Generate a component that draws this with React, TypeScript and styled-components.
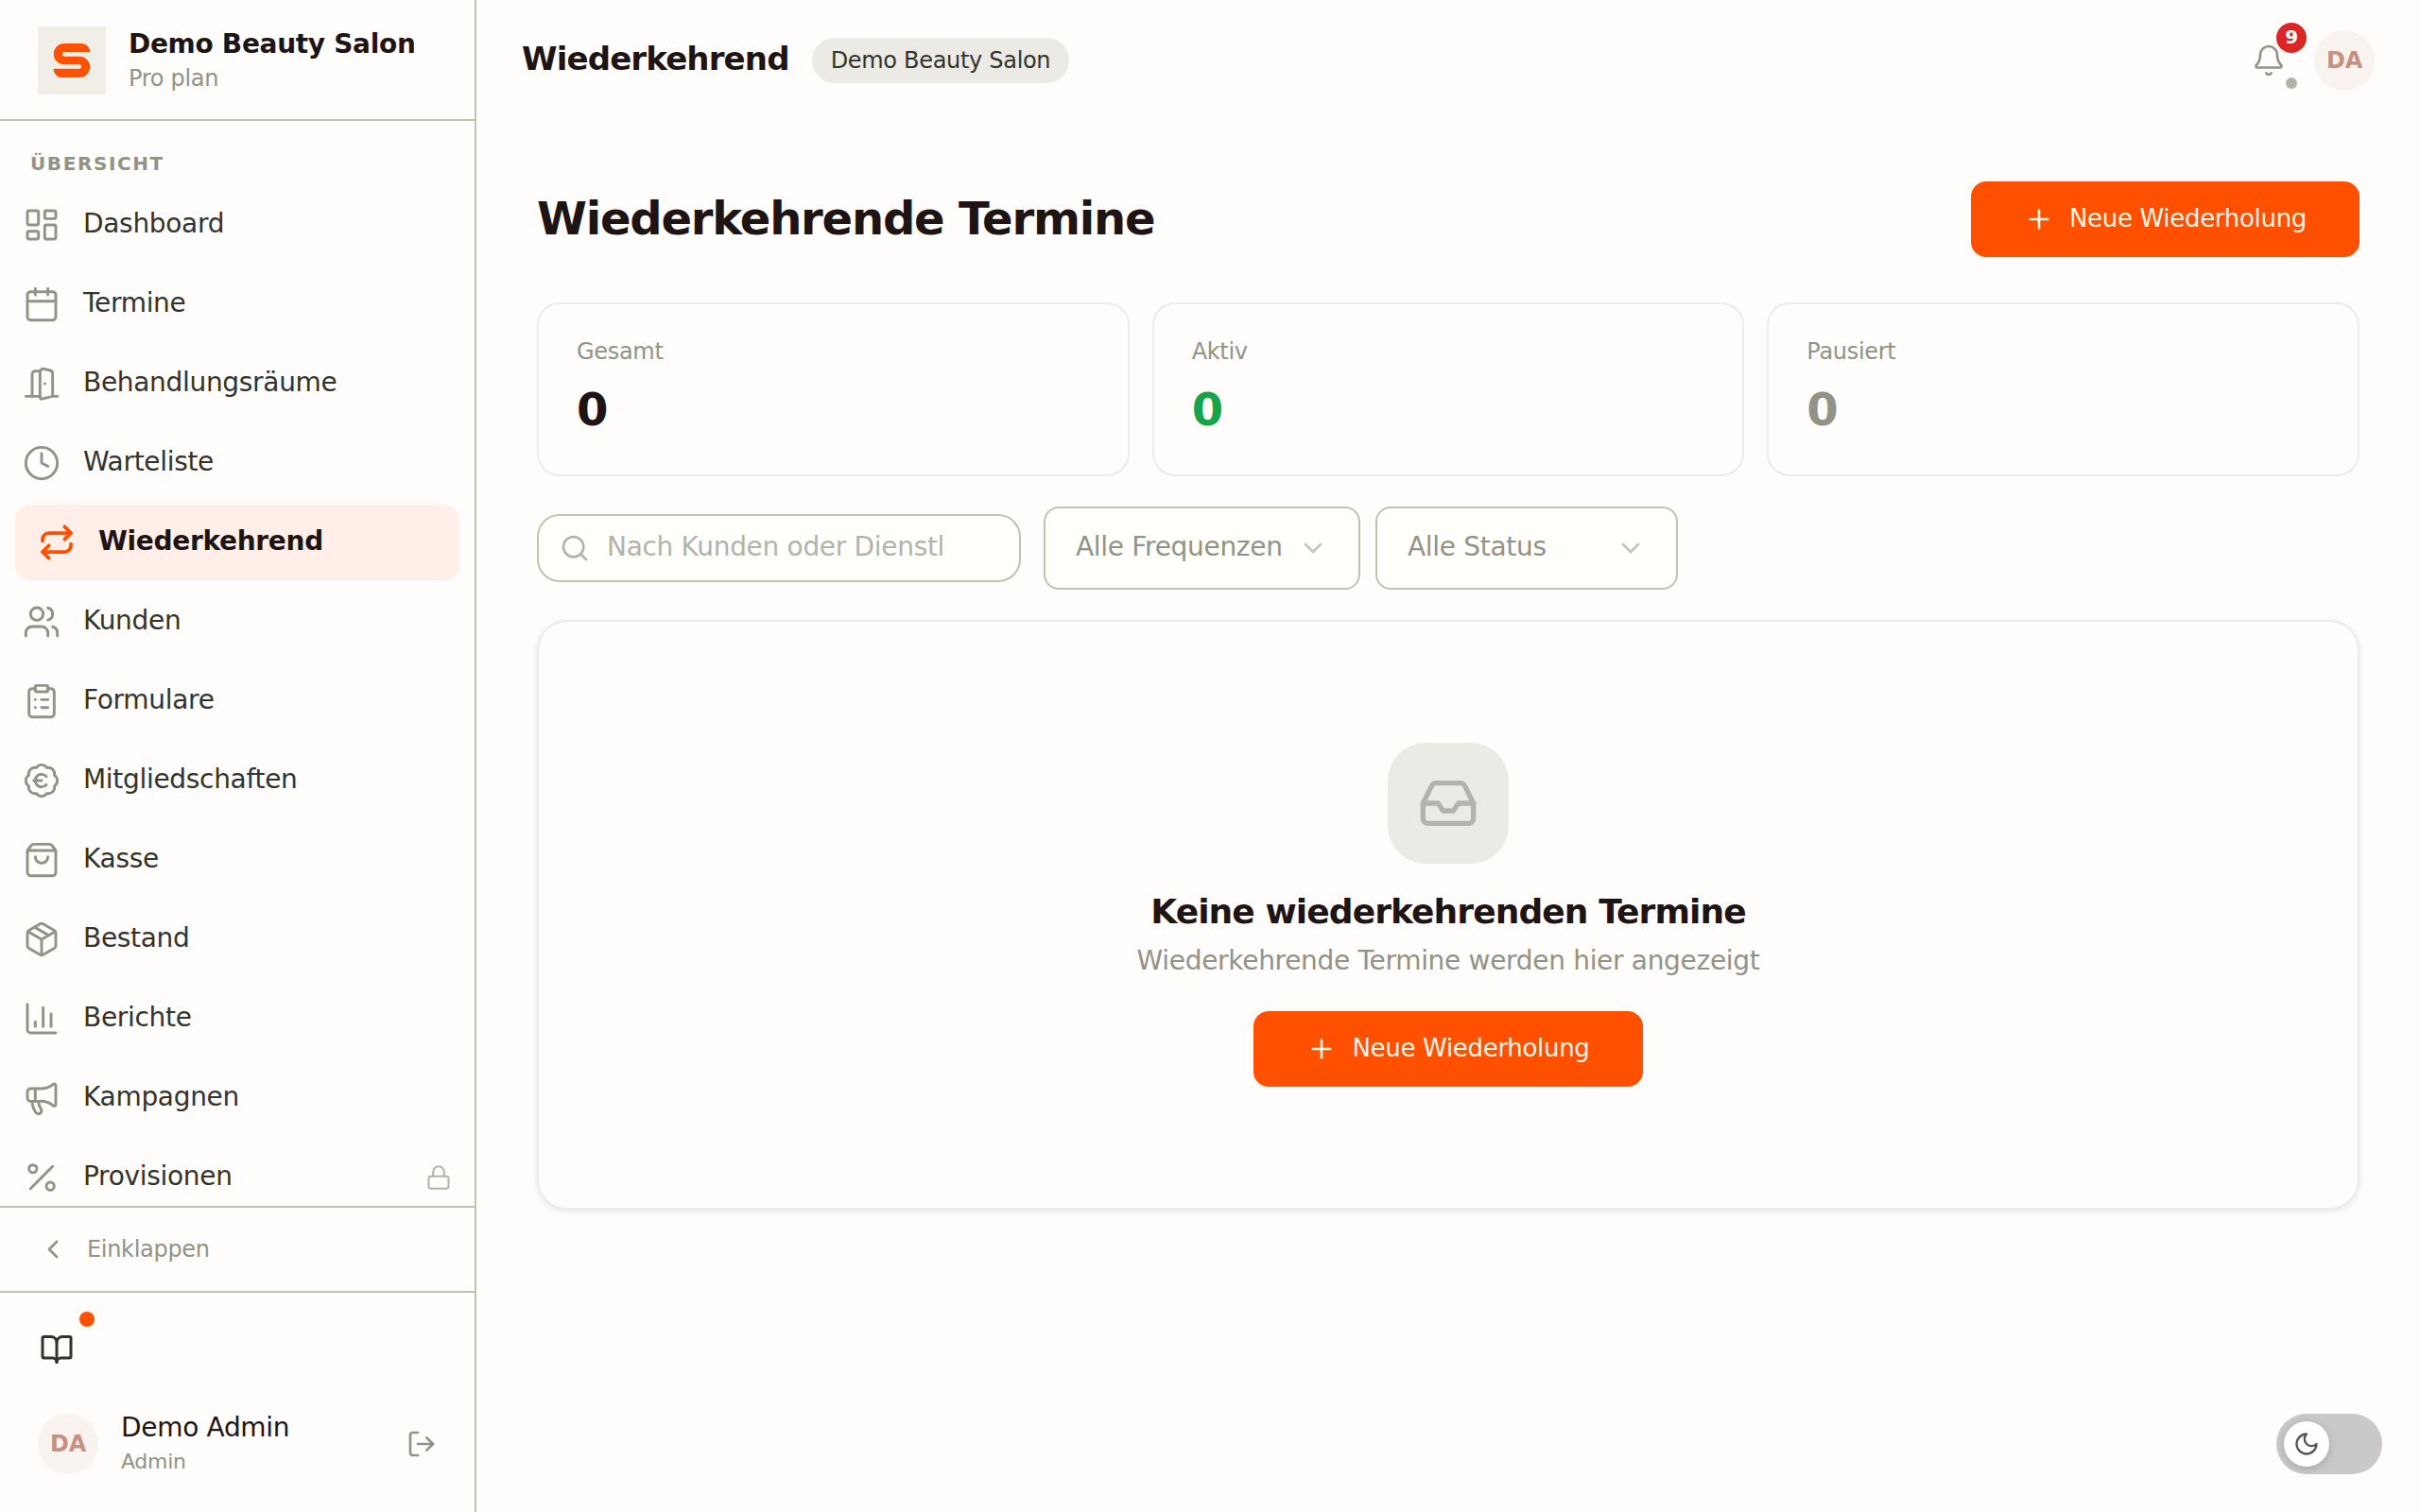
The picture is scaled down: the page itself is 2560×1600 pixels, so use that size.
import React from 'react';
import styled, { createGlobalStyle, css } from 'styled-components';
import {
  BadgeEuro,
  Bell,
  BookOpen,
  Calendar,
  ChartColumn,
  ChevronDown,
  ChevronLeft,
  ClipboardList,
  Clock,
  DoorOpen,
  Inbox,
  LayoutDashboard,
  Lock,
  LogOut,
  Megaphone,
  Package,
  Percent,
  Plus,
  Repeat,
  Search,
  ShoppingBag,
  Users,
  type LucideIcon,
} from 'lucide-react';

const color = {
  page: '#fefdfb',
  field: '#fffffb',
  ink: '#1f1414',
  text: '#33332e',
  muted: '#929286',
  faint: '#b3b2ab',
  line: '#c2c2b2',
  softLine: '#ecebe8',
  chip: '#ebeae5',
  accent: '#ff5000',
  accentSoft: '#ffefe8',
  onAccent: '#fff5e8',
  danger: '#dc2626',
};

const GlobalStyle = createGlobalStyle`
  *, *::before, *::after { box-sizing: border-box; }
  body {
    margin: 0;
    background: ${color.page};
    color: ${color.text};
    font-family: "DejaVu Sans", Verdana, sans-serif;
    font-size: 28px;
    line-height: 40px;
    letter-spacing: -0.011em;
  }
  button, input, select { font: inherit; letter-spacing: inherit; }
  h1, h2, p, ul { margin: 0; padding: 0; }
  svg { flex: none; display: block; }
`;

const Shell = styled.div`
  display: flex;
  min-height: 100vh;
`;

/* Sidebar */

const Sidebar = styled.aside`
  position: sticky;
  top: 0;
  flex: none;
  display: flex;
  flex-direction: column;
  width: 504px;
  height: 100vh;
  border-right: 2px solid ${color.line};
`;

const Brand = styled.div`
  display: flex;
  align-items: center;
  gap: 24px;
  padding: 28px 24px 26px 40px;
  border-bottom: 2px solid ${color.line};
`;

const BrandText = styled.div`
  display: flex;
  flex-direction: column;
`;

const BrandName = styled.span`
  font-weight: 700;
  line-height: 38px;
  color: ${color.ink};
`;

const BrandPlan = styled.span`
  font-size: 24px;
  line-height: 34px;
  color: ${color.muted};
`;

const Nav = styled.nav`
  flex: 1;
  min-height: 0;
  overflow: hidden;
`;

const NavHeading = styled.h2`
  padding: 32px 32px 12px;
  font-size: 20px;
  font-weight: 700;
  line-height: 26px;
  letter-spacing: 0.08em;
  text-transform: uppercase;
  color: ${color.muted};
`;

const NavList = styled.ul`
  display: flex;
  flex-direction: column;
  gap: 4px;
  list-style: none;
`;

const NavLink = styled.a<{ $active?: boolean }>`
  display: flex;
  align-items: center;
  gap: 24px;
  height: 80px;
  padding: 0 24px;
  color: ${color.text};
  text-decoration: none;

  > svg { color: ${color.muted}; }

  ${({ $active }) =>
    $active &&
    css`
      margin: 0 16px;
      border-radius: 16px;
      background: ${color.accentSoft};
      color: ${color.ink};
      font-weight: 700;

      > svg { color: ${color.accent}; }
    `}
`;

const NavLabel = styled.span`
  flex: 1;
  padding-bottom: 2px;
`;

const LockMark = styled(Lock)`
  && { color: ${color.faint}; }
`;

const CollapseBar = styled.div`
  padding: 20px 24px;
  border-top: 2px solid ${color.line};
  border-bottom: 2px solid ${color.line};
`;

const CollapseButton = styled.button`
  display: flex;
  align-items: center;
  gap: 20px;
  width: 100%;
  height: 48px;
  padding: 0 16px;
  border: 0;
  background: none;
  color: ${color.muted};
  font-size: 24px;
`;

const SidebarFooter = styled.div`
  display: flex;
  flex-direction: column;
  gap: 24px;
  padding: 24px 24px 32px;
`;

const IconButton = styled.button<{ $tone?: string }>`
  position: relative;
  display: grid;
  place-items: center;
  width: 72px;
  height: 72px;
  padding: 0;
  border: 0;
  background: none;
  color: ${({ $tone }) => $tone ?? color.muted};
`;

const NewsDot = styled.span`
  position: absolute;
  top: -4px;
  right: -4px;
  width: 16px;
  height: 16px;
  border-radius: 50%;
  background: ${color.accent};
`;

const UserRow = styled.div`
  display: flex;
  align-items: center;
  gap: 24px;
  height: 80px;
  padding: 0 0 0 16px;
`;

const Avatar = styled.span`
  display: grid;
  place-items: center;
  flex: none;
  width: 64px;
  height: 64px;
  border-radius: 50%;
  background: #f8f3ef;
  color: #c79080;
  font-size: 24px;
  font-weight: 700;
`;

const UserText = styled.div`
  display: flex;
  flex: 1;
  flex-direction: column;
`;

const UserName = styled.span`
  line-height: 38px;
  color: ${color.ink};
`;

const UserRole = styled.span`
  font-size: 22px;
  line-height: 34px;
  color: ${color.muted};
`;

const LogoutButton = styled(IconButton)`
  width: 64px;
  height: 64px;
`;

/* Main column */

const Main = styled.div`
  flex: 1;
  min-width: 0;
`;

const TopBar = styled.header`
  display: flex;
  align-items: center;
  height: 128px;
  padding: 0 48px;
`;

const TopTitle = styled.span`
  margin-right: 24px;
  padding-bottom: 4px;
  font-size: 34px;
  font-weight: 700;
  letter-spacing: -0.025em;
  color: ${color.ink};
`;

const SalonChip = styled.span`
  padding: 4px 20px;
  border-radius: 24px;
  background: ${color.chip};
  font-size: 24px;
`;

const TopActions = styled.div`
  display: flex;
  align-items: center;
  gap: 12px;
  margin-left: auto;
`;

const CountBadge = styled.span`
  position: absolute;
  top: -4px;
  right: -4px;
  width: 32px;
  height: 32px;
  border-radius: 50%;
  background: ${color.danger};
  color: #fff;
  font-size: 20px;
  font-weight: 700;
  line-height: 30px;
  text-align: center;
`;

const StatusDot = styled.span`
  position: absolute;
  right: 6px;
  bottom: 6px;
  width: 12px;
  height: 12px;
  border-radius: 50%;
  background: ${color.faint};
`;

const Content = styled.main`
  display: flex;
  flex-direction: column;
  padding: 64px;
`;

const PageHead = styled.div`
  display: flex;
  align-items: center;
  justify-content: space-between;
  margin-bottom: 48px;
`;

const PageTitle = styled.h1`
  padding-bottom: 2px;
  font-size: 48px;
  font-weight: 700;
  line-height: 60px;
  letter-spacing: -0.025em;
  color: ${color.ink};
`;

const PrimaryButton = styled.button`
  display: flex;
  align-items: center;
  gap: 16px;
  height: 80px;
  padding: 0 56px;
  border: 0;
  border-radius: 16px;
  background: ${color.accent};
  color: ${color.onAccent};
  font-size: 26px;
`;

const ButtonLabel = styled.span`
  padding-bottom: 2px;
`;

const Stats = styled.div`
  display: grid;
  grid-template-columns: repeat(3, 1fr);
  gap: 24px;
  margin-bottom: 32px;
`;

const StatCard = styled.section`
  display: flex;
  flex-direction: column;
  gap: 8px;
  padding: 32px 40px 34px;
  border: 2px solid ${color.softLine};
  border-radius: 24px;
`;

const StatLabel = styled.span`
  font-size: 24px;
  line-height: 36px;
  color: ${color.muted};
`;

const StatValue = styled.span<{ $tone: string }>`
  font-size: 48px;
  font-weight: 700;
  line-height: 70px;
  color: ${({ $tone }) => $tone};
`;

const Filters = styled.form`
  display: flex;
  align-items: center;
  gap: 24px;
  margin-bottom: 32px;
`;

const SearchBox = styled.label`
  display: flex;
  align-items: center;
  gap: 18px;
  width: 512px;
  height: 72px;
  padding: 0 78px 0 22px;
  border: 2px solid ${color.line};
  border-radius: 24px;
  background: ${color.field};
  color: ${color.faint};
`;

const SearchInput = styled.input`
  flex: 1;
  min-width: 0;
  padding: 0 0 2px;
  border: 0;
  outline: 0;
  background: none;
  color: ${color.text};

  &::placeholder { color: ${color.faint}; opacity: 1; }
`;

const SelectGroup = styled.div`
  display: flex;
  gap: 16px;
`;

const SelectBox = styled.div`
  position: relative;

  > svg {
    position: absolute;
    top: 28px;
    right: 34px;
    color: #c5c4bf;
    pointer-events: none;
  }
`;

const Select = styled.select`
  appearance: none;
  display: block;
  min-width: 320px;
  height: 88px;
  padding: 0 80px 2px 32px;
  border: 2px solid ${color.line};
  border-radius: 16px;
  background: ${color.field};
  color: ${color.muted};
`;

const EmptyPanel = styled.section`
  display: flex;
  flex-direction: column;
  align-items: center;
  padding: 128px 64px;
  border: 2px solid ${color.softLine};
  border-radius: 32px;
  box-shadow: 0 2px 6px rgba(31, 20, 20, 0.1);
`;

const EmptyIcon = styled.div`
  display: grid;
  place-items: center;
  width: 128px;
  height: 128px;
  margin-bottom: 24px;
  border-radius: 40px;
  background: ${color.chip};
  color: ${color.faint};
`;

const EmptyTitle = styled.h2`
  margin-bottom: 4px;
  font-size: 36px;
  font-weight: 700;
  line-height: 54px;
  letter-spacing: -0.025em;
  color: ${color.ink};
`;

const EmptyText = styled.p`
  margin-bottom: 32px;
  line-height: 42px;
  color: ${color.muted};
`;

/* Theme switch */

const ThemeSwitch = styled.label`
  position: fixed;
  right: 40px;
  bottom: 40px;
  display: flex;
  align-items: center;
  width: 112px;
  height: 64px;
  padding: 8px;
  border-radius: 32px;
  background: #c9c9c9;
`;

const SwitchInput = styled.input`
  position: absolute;
  inset: 0;
  width: 100%;
  height: 100%;
  margin: 0;
  opacity: 0;
`;

const SwitchKnob = styled.span`
  display: grid;
  place-items: center;
  width: 48px;
  height: 48px;
  border-radius: 50%;
  background: #fff;
  color: #555;
  box-shadow: 0 2px 10px rgba(0, 0, 0, 0.18);
`;

interface NavEntry {
  label: string;
  icon: LucideIcon;
  active?: boolean;
  locked?: boolean;
}

const navEntries: NavEntry[] = [
  { label: 'Dashboard', icon: LayoutDashboard },
  { label: 'Termine', icon: Calendar },
  { label: 'Behandlungsräume', icon: DoorOpen },
  { label: 'Warteliste', icon: Clock },
  { label: 'Wiederkehrend', icon: Repeat, active: true },
  { label: 'Kunden', icon: Users },
  { label: 'Formulare', icon: ClipboardList },
  { label: 'Mitgliedschaften', icon: BadgeEuro },
  { label: 'Kasse', icon: ShoppingBag },
  { label: 'Bestand', icon: Package },
  { label: 'Berichte', icon: ChartColumn },
  { label: 'Kampagnen', icon: Megaphone },
  { label: 'Provisionen', icon: Percent, locked: true },
];

const stats = [
  { label: 'Gesamt', value: 0, tone: color.ink },
  { label: 'Aktiv', value: 0, tone: '#16a34a' },
  { label: 'Pausiert', value: 0, tone: color.muted },
];

function Logo() {
  return (
    <svg width="72" height="72" viewBox="0 0 216 216" aria-hidden="true">
      <rect width="216" height="216" fill="#f0eee6" />
      <path
        fill={color.accent}
        d="M166 81C166 66 154 54 138 54H84A33.5 33.5 0 0 0 84 121H132Q138 121 138 128Q138 134 132 134H50C50 150 62 162 78 162H132A33.5 33.5 0 0 0 132 95H84Q78 95 78 88Q78 81 84 81Z"
      />
    </svg>
  );
}

function Moon() {
  return (
    <svg
      width="28"
      height="28"
      viewBox="0 0 24 24"
      fill="none"
      stroke="currentColor"
      strokeWidth="2"
      strokeLinecap="round"
      strokeLinejoin="round"
      aria-hidden="true"
    >
      <path d="M12 3a6 6 0 0 0 9 9 9 9 0 1 1-9-9Z" />
    </svg>
  );
}

function NewSeriesButton() {
  return (
    <PrimaryButton type="button">
      <Plus size={32} strokeWidth={2} />
      <ButtonLabel>Neue Wiederholung</ButtonLabel>
    </PrimaryButton>
  );
}

function FilterSelect({ label, option }: { label: string; option: string }) {
  return (
    <SelectBox>
      <Select aria-label={label}>
        <option>{option}</option>
      </Select>
      <ChevronDown size={32} strokeWidth={2} />
    </SelectBox>
  );
}

export default function App() {
  return (
    <>
      <GlobalStyle />
      <Shell>
        <Sidebar>
          <Brand>
            <Logo />
            <BrandText>
              <BrandName>Demo Beauty Salon</BrandName>
              <BrandPlan>Pro plan</BrandPlan>
            </BrandText>
          </Brand>
          <Nav>
            <NavHeading>Übersicht</NavHeading>
            <NavList>
              {navEntries.map(({ label, icon: Icon, active, locked }) => (
                <li key={label}>
                  <NavLink href="#" $active={active} aria-current={active ? 'page' : undefined}>
                    <Icon size={40} strokeWidth={active ? 2.25 : 1.75} />
                    <NavLabel>{label}</NavLabel>
                    {locked && <LockMark size={28} strokeWidth={1.75} />}
                  </NavLink>
                </li>
              ))}
            </NavList>
          </Nav>
          <CollapseBar>
            <CollapseButton type="button">
              <ChevronLeft size={32} strokeWidth={2} />
              Einklappen
            </CollapseButton>
          </CollapseBar>
          <SidebarFooter>
            <IconButton type="button" $tone={color.text} aria-label="Hilfe">
              <BookOpen size={36} strokeWidth={2} />
              <NewsDot />
            </IconButton>
            <UserRow>
              <Avatar>DA</Avatar>
              <UserText>
                <UserName>Demo Admin</UserName>
                <UserRole>Admin</UserRole>
              </UserText>
              <LogoutButton type="button" aria-label="Abmelden">
                <LogOut size={32} strokeWidth={2} />
              </LogoutButton>
            </UserRow>
          </SidebarFooter>
        </Sidebar>

        <Main>
          <TopBar>
            <TopTitle>Wiederkehrend</TopTitle>
            <SalonChip>Demo Beauty Salon</SalonChip>
            <TopActions>
              <IconButton type="button" aria-label="Benachrichtigungen">
                <Bell size={36} strokeWidth={1.75} />
                <CountBadge>9</CountBadge>
                <StatusDot />
              </IconButton>
              <Avatar>DA</Avatar>
            </TopActions>
          </TopBar>

          <Content>
            <PageHead>
              <PageTitle>Wiederkehrende Termine</PageTitle>
              <NewSeriesButton />
            </PageHead>

            <Stats>
              {stats.map((stat) => (
                <StatCard key={stat.label}>
                  <StatLabel>{stat.label}</StatLabel>
                  <StatValue $tone={stat.tone}>{stat.value}</StatValue>
                </StatCard>
              ))}
            </Stats>

            <Filters>
              <SearchBox>
                <Search size={32} strokeWidth={2} />
                <SearchInput type="text" aria-label="Suche" placeholder="Nach Kunden oder Dienstl" />
              </SearchBox>
              <SelectGroup>
                <FilterSelect label="Frequenz" option="Alle Frequenzen" />
                <FilterSelect label="Status" option="Alle Status" />
              </SelectGroup>
            </Filters>

            <EmptyPanel>
              <EmptyIcon>
                <Inbox size={64} strokeWidth={2} />
              </EmptyIcon>
              <EmptyTitle>Keine wiederkehrenden Termine</EmptyTitle>
              <EmptyText>Wiederkehrende Termine werden hier angezeigt</EmptyText>
              <NewSeriesButton />
            </EmptyPanel>
          </Content>
        </Main>
      </Shell>

      <ThemeSwitch>
        <SwitchInput type="checkbox" role="switch" aria-label="Dunkles Design" />
        <SwitchKnob>
          <Moon />
        </SwitchKnob>
      </ThemeSwitch>
    </>
  );
}
